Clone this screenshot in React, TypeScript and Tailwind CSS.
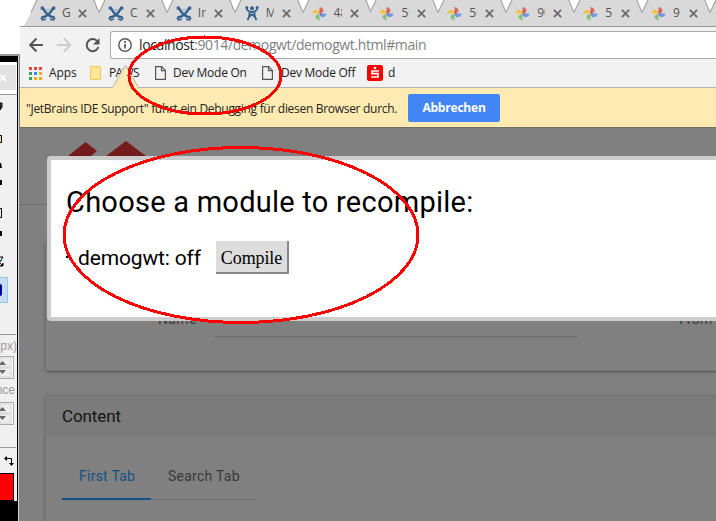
import React from "react";

const ui = "font-['Open_Sans','Noto_Sans',sans-serif]";
const roboto = "font-[Roboto,sans-serif]";

function Confluence() {
  return (
    <svg className="h-[15px] w-4 shrink-0" viewBox="0 0 16 15">
      <g fill="none" stroke="#35608f" strokeLinecap="butt">
        <path d="M2 2.200 3.600 3.200C5.500 7 9 10.500 14.800 11.800" strokeWidth="2.500" />
        <path d="M14 2.200 12.400 3.200C10.500 7 7 10.500 1.200 11.800" strokeWidth="2.500" />
        <path d="M.8 12 3 14.200 6 12.800M15.200 12 13 14.200 10 12.800" strokeWidth="1.400" />
      </g>
      <circle cx="2.300" cy="2" r="1.800" fill="#35608f" />
      <circle cx="13.700" cy="2" r="1.800" fill="#35608f" />
      <path d="m5.600 2.300 2.400 1.600 2.400-1.600L8 6Z" fill="#8ca5c4" />
    </svg>
  );
}

function Jira() {
  return (
    <svg className="h-4 w-4 shrink-0" viewBox="0 0 16 16">
      <g fill="none" stroke="#35608f" strokeWidth="2">
        <path d="M2.600 3.500C3.500 6 5 7 8 7s4.500-1 5.400-3.500" />
        <path d="M5.200 7.500C6 9.500 5.600 12 3.500 15M10.800 7.500c-.8 2-.4 4.500 1.700 7.500" />
        <path d="M5 11.800 8 9.500l3 2.300" strokeWidth="1.800" />
      </g>
      <g fill="#35608f">
        <circle cx="8" cy="3.200" r="2" />
        <circle cx="2.800" cy="2.600" r="1.500" />
        <circle cx="13.200" cy="2.600" r="1.500" />
      </g>
    </svg>
  );
}

function Pinwheel() {
  return (
    <svg className="h-[15px] w-[15px] shrink-0" viewBox="0 0 16 16">
      <path d="M8 8V1c3 .4 4.500 2 4.300 5L8 8Z" fill="#db6a5c" />
      <path d="M8 8h7.500c-.5 2.900-2.500 4.300-5.500 4L8 8Z" fill="#6b9bea" />
      <path d="M8 8v7.500c-3-.6-4.600-2.200-4.300-5L8 8Z" fill="#82c27c" />
      <path d="M8 8H.5C.9 5.200 2.600 3.700 5.800 4L8 8Z" fill="#f5bf42" />
      <path d="M8 8V4.500l3 2.500ZM8 8h3.300L9 10.800Z" fill="#a44768" opacity=".65" />
    </svg>
  );
}

const tabs = [
  ["c", "G"], ["c", "C"], ["c", "Ir"], ["j", "M"], ["p", "48"],
  ["p", "59"], ["p", "50"], ["p", "90"], ["p", "5"], ["p", "9"], ["", ""],
];

function Tab({ kind, label }: { kind: string; label: string }) {
  return (
    <div className="relative flex h-[26px] w-[67.9px] shrink-0 items-center pl-4">
      <svg className="absolute top-0 left-0 h-[26px] w-[84px]" viewBox="0 0 84 26">
        <path d="M0 26 4 18 7 12 13 0H70L80.500 26Z" fill="#d9d9d9" />
        <path d="M7 12.500 13 0M69.800 0 80.500 26" stroke="#a6a6a6" strokeWidth="1.200" />
      </svg>
      <div className="relative flex h-[26px] items-center">
        <span className="flex w-4">
          {kind === "c" && <Confluence />}
          {kind === "j" && <Jira />}
          {kind === "p" && <Pinwheel />}
        </span>
        <span className="ml-[6px] w-[8px] overflow-hidden text-[12px] leading-[18px] text-[#555]">{label}</span>
        {kind && (
          <svg className="ml-2 h-[9px] w-[9px]" viewBox="0 0 9 9">
            <path d="m.9.9 7.200 7.200m0-7.200L.9 8.100" stroke="#6a6a6a" strokeWidth="1.800" />
          </svg>
        )}
      </div>
    </div>
  );
}

function PageIcon() {
  return (
    <svg className="h-[14px] w-[11px] shrink-0" viewBox="0 0 11 14" fill="none" stroke="#555" strokeWidth="1.200">
      <path d="M.6.6h6L10.400 4.400v9H.6Z" />
      <path d="M6.500.6v4h4" />
    </svg>
  );
}

const gridColors = ["#ea4335", "#ea4335", "#ea4335", "#34a05a", "#2196f3", "#fbab18", "#34a05a", "#fbab18", "#fbab18"];

function Stepper() {
  return (
    <div className="h-[23px] w-[14px] border border-l-0 border-[#aaa] bg-[#f6f6f6] pr-px">
      <svg className="h-[21px] w-3" viewBox="0 0 12 21">
        <path d="M0 1h11v9H0ZM0 11h11v9H0Z" fill="#eee" stroke="#ccc" strokeWidth=".8" />
        <path d="M-1 8 2.500 4 6 8ZM-1 13 2.500 17 6 13Z" fill="#666" />
      </svg>
    </div>
  );
}

function ToolPanel() {
  return (
    <aside className="flex h-full w-5 shrink-0 flex-col bg-white">
      <div className="h-[54px] shrink-0 bg-white" />
      <div className="flex min-h-0 flex-1 border-t-2 border-[#999]">
        <div className="flex w-[17px] flex-col overflow-hidden bg-[#f0f0f0]">
          <div className="h-[6px] shrink-0 bg-black" />
          <div className="h-[33px] shrink-0 border-b border-[#999] bg-white pt-[3px]">
            <div className="flex h-[25px] w-4 items-center bg-[#e2e2e2]">
              <svg className="h-2 w-2" viewBox="0 0 8 8"><path d="m0 1 6 6m0-6L0 7" stroke="white" strokeWidth="1.500" /></svg>
            </div>
          </div>
          <svg className="h-[182px] w-[17px] shrink-0" viewBox="0 95 17 182">
            <path d="M0 103h2v4l-2 3Z" fill="#555" stroke="black" />
            <path d="M-1 135.500h2.500v7H-1" fill="#e9d49c" stroke="black" />
            <path d="M0 163h1l1 5H0ZM0 180h2v5H0ZM0 231h2v5H0Z" fill="black" />
            <path d="M-1 208.500h2.500v9H-1" fill="none" stroke="black" />
            <path d="M0 257h3M0 262l3-5M0 266h3v-3M0 263l3 3" stroke="black" />
            <path d="M0 260h2" stroke="#2a9a9a" />
          </svg>
          <div className="flex h-[26px] w-2 shrink-0 items-center border border-l-0 border-[#90c8f6] bg-[#c5ddf2]">
            <span className="h-3 w-[2px] rounded-r bg-[#00008c]" />
          </div>
          <div className="mt-[31px] h-px w-4 shrink-0 bg-[#999]" />
          <div className="mt-[2px] flex h-[19px] w-[17px] shrink-0 items-center justify-end text-[12px] leading-[19px] text-[#999] font-['Liberation_Sans',sans-serif]">px)</div>
          <div className="h-[23px] shrink-0"><Stepper /></div>
          <div className="flex h-[23px] w-[15px] shrink-0 items-center justify-end text-[12px] leading-[23px] text-[#999] font-['Liberation_Sans',sans-serif]">nce</div>
          <div className="h-[23px] shrink-0"><Stepper /></div>
          <div className="mt-[22px] h-px w-4 shrink-0 bg-[#999]" />
          <svg className="mt-[8px] h-[10px] w-[17px] shrink-0" viewBox="0 0 17 10">
            <path d="M5 2.500h6.500V8" fill="none" stroke="black" />
            <path d="m4 2.500 3-2.500v5ZM9 7h5l-2.500 3Z" fill="black" />
          </svg>
          <div className="mt-[7px] h-[28px] w-[14px] shrink-0 border border-l-0 border-black bg-[#f00]" />
          <div className="min-h-0 flex-1 bg-black" />
        </div>
        <div className="w-px bg-black" />
        <div className="w-px bg-[#d2d2d2]" />
        <div className="w-px bg-[#808080]" />
      </div>
    </aside>
  );
}

export default function App() {
  return (
    <div className={`relative flex h-[521px] w-[716px] overflow-hidden bg-white ${ui}`}>
      <ToolPanel />
      <main className="flex min-w-0 flex-1 flex-col overflow-hidden">
        <div className="flex h-[27px] shrink-0 flex-row border-b border-[#999] bg-white pl-[4px]">
          {tabs.map(([k, t], i) => <Tab key={i} kind={k} label={t} />)}
        </div>

        <div className="flex h-[33px] shrink-0 items-center bg-[#f2f2f2] pl-[9px]">
          <svg className="mt-[2px] h-4 w-[72px]" viewBox="0 0 72 16" fill="none" strokeWidth="2">
            <path d="M14 8H1.500M7.500 1.500 1.200 8l6.300 6.500" stroke="#555" />
            <path d="M28 8h12.500M35 1.500 41.300 8 35 14.500" stroke="#ccc" />
            <path d="M68.500 4.500a6 6 0 1 0 .9 5.500" stroke="#555" />
            <path d="M70.500 1v6.500H64Z" fill="#555" />
          </svg>
          <div className="mt-[3px] ml-[9px] flex h-7 flex-1 items-center rounded-l-[3px] border border-r-0 border-[#aaa] bg-white pl-[7px]">
            <svg className="h-[14px] w-[14px]" viewBox="0 0 14 14">
              <circle cx="7" cy="7" r="6.200" fill="none" stroke="#555" strokeWidth="1.400" />
              <path d="M7 6v4.500M7 3v2" stroke="#555" strokeWidth="1.700" />
            </svg>
            <span className="ml-[7px] text-[14px] leading-5 tracking-[-0.39px] whitespace-nowrap text-[#808080]"><span className="text-[#222]">localhost</span>:9014/demogwt/demogwt.html#main</span>
          </div>
        </div>

        <div className="flex h-7 shrink-0 items-center border-b border-[#b3b3b3] bg-[#f2f2f2] pb-px pl-[9px] text-[12px] leading-4 tracking-[-0.25px] whitespace-nowrap text-[#222]">
          <div className="grid grid-cols-[3px_3px_3px] gap-[2px]">
            {gridColors.map((c, i) => <span key={i} className="size-[3px]" style={{ background: c }} />)}
          </div>
          <span className="ml-[7px] w-[41px] tracking-[-0.1px]">Apps</span>
          <span className="h-[14px] w-[11px] rounded-[1px] border border-[#ecc958] bg-[#ffe795]" />
          <span className="ml-[8px] w-[46px] tracking-[-0.6px]">PAWS</span>
          <PageIcon />
          <span className="ml-[7px] w-[89px]">Dev Mode On</span>
          <PageIcon />
          <span className="ml-[8px] w-[86px]">Dev Mode Off</span>
          <svg className="h-4 w-4" viewBox="0 0 16 16">
            <rect width="16" height="16" rx="2" fill="#f00" />
            <circle cx="8" cy="3" r="1.300" fill="white" />
            <path d="M12 6H5v2.700h6V12H4" fill="none" stroke="white" strokeWidth="1.700" />
          </svg>
          <span className="ml-[5px]">d</span>
        </div>

        <div className="flex h-10 shrink-0 items-center border-b border-[#6e6e66] bg-[#ffebb2] pl-[6px] text-[12px] leading-4 whitespace-nowrap text-[#222]">
          <span className="w-[382px] pt-[2px] tracking-[-0.3px]">"JetBrains IDE Support" führt ein Debugging für diesen Browser durch.</span>
          <button className="mt-px h-7 w-[92px] rounded-[2px] bg-[#4285f4] text-[12px] font-bold tracking-[-0.2px] text-white">Abbrechen</button>
        </div>

        <div className={`relative min-h-0 flex-1 overflow-hidden bg-[#808080] ${roboto}`}>
          <div className="flex h-[77px] items-start border-b border-[#6f6f6f] pl-12">
            <svg className="mt-[13px] h-[34px] w-[78px]" viewBox="0 0 78 34">
              <path d="M0 15 17.500 1 29 10 0 34ZM38 15 58 0l20 15-20 15Z" fill="#751b1e" />
            </svg>
          </div>
          <section className="mt-[36px] ml-[25px] flex h-[130px] w-[750px] items-end rounded-[3px] border border-[#757575] pb-[33px] pl-[112px] text-[14px] leading-[18px] tracking-[0.3px] text-[#3b3b3b] shadow-[0_1px_3px_rgba(0,0,0,0.35)]">
            <span className="mb-[9px] w-[56px]">Name</span>
            <span className="h-px w-[363px] bg-[#6c6c6c]" />
            <span className="mb-[9px] ml-[102px]">From</span>
          </section>
          <section className="mt-[24px] ml-[25px] h-[180px] w-[750px] rounded-[3px] border border-[#757575] shadow-[0_1px_3px_rgba(0,0,0,0.25)]">
            <h2 className="flex h-10 items-center bg-[#7b7b7b] pt-[2px] pl-[16px] text-[17px] tracking-[-0.1px] text-[#141414]">Content</h2>
            <div className="mt-[22px] ml-4 flex h-[42px] w-[194px] border-b border-[#6e6e6e] text-[14px] leading-5 tracking-[0.25px]">
              <span className="h-[42px] w-[89px] border-b-2 border-[#12518a] pt-[8px] pl-[17px] text-[#155083]">First Tab</span>
              <span className="pt-[8px] pl-[17px] text-[#393939]">Search Tab</span>
            </div>
          </section>
          <div role="dialog" className="absolute top-[28px] left-[27px] h-[165px] w-[900px] rounded-[4px] border-4 border-[#ccc] bg-white pt-[23px] pl-[15px] text-black">
            <h1 className="text-[29px] leading-[38px] tracking-[0.25px]">Choose a module to recompile:</h1>
            <div className="mt-[19px] flex h-[34px] items-center text-[21px]">
              <span className="h-[2px] w-[12px]"><span className="block h-[2px] w-[3px] bg-black" /></span>
              <span className="w-[138px] pt-[4px] tracking-[-0.15px]">demogwt: off</span>
              <button className="h-[33px] w-[73px] border-r-2 border-b-2 border-[#888] bg-[#ddd] pt-[3px] text-[18px] leading-6 tracking-[-0.1px] text-black font-['Liberation_Serif',serif]">Compile</button>
            </div>
          </div>
        </div>
      </main>

      <svg className="pointer-events-none absolute inset-0 h-[521px] w-[716px]" viewBox="0 0 716 521" fill="none">
        <path d="M112 88 125.500 65 138.500 88Z" fill="#ffebb2" />
        <path d="M112.500 87.500 125.500 65.500 138.500 87.500" stroke="#b3b3b3" />
        <g stroke="#f00" strokeWidth="3" shapeRendering="crispEdges">
          <ellipse cx="205" cy="75.500" rx="76" ry="38.500" />
          <ellipse cx="241" cy="235" rx="177" ry="87.500" />
        </g>
      </svg>
    </div>
  );
}
